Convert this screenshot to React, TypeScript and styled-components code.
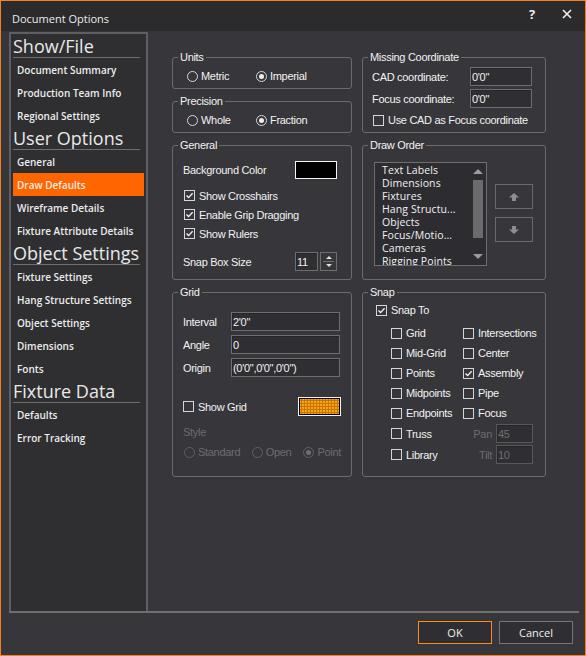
import styled, { createGlobalStyle } from "styled-components";

const GlobalStyle = createGlobalStyle`
  html, body {
    margin: 0;
    padding: 0;
    background: #37363a;
  }
  body {
    width: 586px;
    height: 656px;
    overflow: hidden;
  }
  * {
    box-sizing: border-box;
  }
`;

const Window = styled.div`
  width: 586px;
  height: 656px;
  border: 1px solid #f7801e;
  background: #37363a;
  display: flex;
  flex-direction: column;
  font-family: "Liberation Sans", Arial, sans-serif;
  font-size: 11px;
  color: #f2f2f2;
`;

const TitleBar = styled.div`
  height: 30px;
  flex: none;
  background: #2b2a2d;
  display: flex;
  align-items: center;
  padding-left: 11px;
  font-family: "Open Sans", sans-serif;
  font-size: 11px;
  color: #ececec;

  .title {
    flex: 1;
    padding-top: 4px;
  }
`;

const TitleButton = styled.div<{ $w: number }>`
  width: ${(p) => p.$w}px;
  height: 30px;
  display: flex;
  align-items: center;
  justify-content: center;
  font-weight: 700;
  font-size: 13px;
  padding-bottom: 4px;
`;

const Main = styled.div`
  display: flex;
  height: 581px;
  margin: 1px 6px 0 8px;
  border-bottom: 2px solid #6f6f6f;
`;

const Sidebar = styled.div`
  width: 139px;
  flex: none;
  background: #2f2f31;
  border: 2px solid #5f5f61;
  border-bottom: none;
  padding: 1px 0 0;
  font-family: "Open Sans", sans-serif;
`;

const NavHeader = styled.div`
  height: 23px;
  margin: 0 6px 0 2px;
  border-bottom: 1px solid #6e6e6e;
  font-size: 18px;
  line-height: 22px;
  color: #e9e9e9;
  white-space: nowrap;
`;

const NavItem = styled.div<{ $active?: boolean }>`
  height: 23px;
  margin: 0 2px;
  padding-left: 4px;
  display: flex;
  align-items: center;
  font-size: 10px;
  font-weight: 600;
  color: #ececec;
  white-space: nowrap;
  background: ${(p) => (p.$active ? "#ff6600" : "transparent")};
`;

const Content = styled.div`
  flex: 1;
  display: flex;
  gap: 10px;
  padding: 19px 0 0 24px;
  letter-spacing: -0.3px;
`;

const Column = styled.div<{ $w: number }>`
  width: ${(p) => p.$w}px;
  display: flex;
  flex-direction: column;
  gap: 6px;
`;

const Group = styled.fieldset<{ $h: number }>`
  margin: 0;
  padding: 0;
  min-width: 0;
  height: ${(p) => p.$h}px;
  border: 1px solid #6b6b6d;
  border-radius: 3px;

  legend {
    margin-left: 5px;
    padding: 0 2px;
    line-height: 12px;
    font-size: 11px;
  }
`;

const RadioRow = styled.div<{ $pad?: string }>`
  display: flex;
  align-items: center;
  height: 14px;
  padding: ${(p) => p.$pad || "0"};
  box-sizing: content-box;
`;

const OptionLabel = styled.label<{ $w?: number; $disabled?: boolean }>`
  display: flex;
  align-items: center;
  gap: 3px;
  height: 14px;
  width: ${(p) => (p.$w ? `${p.$w}px` : "auto")};
  color: ${(p) => (p.$disabled ? "#6d6d70" : "#f2f2f2")};
  white-space: nowrap;
`;

const RadioDot = styled.span<{ $on?: boolean; $disabled?: boolean }>`
  width: 11px;
  height: 11px;
  flex: none;
  border-radius: 50%;
  border: 1px solid ${(p) => (p.$disabled ? "#616164" : "#d8d8d8")};
  display: grid;
  place-items: center;

  &::after {
    content: "";
    width: 5px;
    height: 5px;
    border-radius: 50%;
    background: ${(p) => (p.$disabled ? "#6d6d70" : "#ececec")};
    display: ${(p) => (p.$on ? "block" : "none")};
  }
`;

const CheckBox = styled.span<{ $disabled?: boolean }>`
  width: 11px;
  height: 11px;
  flex: none;
  border: 1px solid ${(p) => (p.$disabled ? "#616164" : "#d6d6d6")};
  display: grid;
  place-items: center;
  margin-right: 1px;
`;

const Input = styled.input<{ $w?: number; $disabled?: boolean }>`
  width: ${(p) => (p.$w ? `${p.$w}px` : "100%")};
  height: 19px;
  border: 1px solid ${(p) => (p.$disabled ? "#58585b" : "#6e6e71")};
  box-shadow: inset 1px 1px 0 #262528;
  background: #2f2e32;
  color: ${(p) => (p.$disabled ? "#6f6f72" : "#f2f2f2")};
  font: inherit;
  letter-spacing: -0.3px;
  padding: 0 1px;
  outline: none;
`;

const Swatch = styled.div<{ $w: number; $h: number; $grid?: boolean }>`
  width: ${(p) => p.$w}px;
  height: ${(p) => p.$h}px;
  border: 1px solid #f4f4f4;
  box-shadow: inset 0 0 0 1px #000;
  background: ${(p) =>
    p.$grid
      ? `repeating-linear-gradient(90deg, transparent 0 2px, #c77700 2px 3px),
         repeating-linear-gradient(0deg, transparent 0 2px, #c77700 2px 3px), #f6a31c`
      : "#000"};
`;

/* General */
const GeneralBody = styled.div`
  padding: 10px 14px 0 10px;
`;

const SpreadRow = styled.div<{ $h: number; $mt?: number }>`
  display: flex;
  align-items: center;
  justify-content: space-between;
  height: ${(p) => p.$h}px;
  margin-top: ${(p) => p.$mt || 0}px;
`;

const CheckList = styled.div`
  margin: 7px 0 0 1px;
  display: flex;
  flex-direction: column;

  & > label {
    height: 19px;
  }
`;

const SpinGroup = styled.div`
  display: flex;
  gap: 2px;
`;

const Spinner = styled.div`
  width: 17px;
  height: 19px;
  border: 1px solid #6e6e71;
  display: flex;
  flex-direction: column;
  align-items: center;
  justify-content: space-around;
  padding: 2px 0;

  span {
    width: 0;
    height: 0;
    border-left: 3px solid transparent;
    border-right: 3px solid transparent;
  }
  .up {
    border-bottom: 3px solid #e0e0e0;
  }
  .down {
    border-top: 3px solid #e0e0e0;
  }
  hr {
    width: 11px;
    margin: 0;
    border: none;
    border-top: 1px solid #6e6e71;
  }
`;

/* Grid */
const GridBody = styled.div`
  padding: 14px 10px 0 10px;
`;

const FieldGrid = styled.div<{ $cols: string; $gap: number }>`
  display: grid;
  grid-template-columns: ${(p) => p.$cols};
  grid-auto-rows: 19px;
  row-gap: ${(p) => p.$gap}px;
  align-items: center;
  white-space: nowrap;
`;

const MutedLabel = styled.div<{ $mt: number }>`
  height: 14px;
  line-height: 14px;
  margin-top: ${(p) => p.$mt}px;
  color: #6d6d70;
`;

/* Missing coordinate */
const MissingBody = styled.div`
  padding: 4px 12px 0 9px;
`;

/* Draw order */
const DrawBody = styled.div`
  display: flex;
  gap: 8px;
  padding: 11px 0 0 11px;
`;

const ListBox = styled.div`
  width: 113px;
  height: 104px;
  border: 1px solid #6e6e71;
  background: #2d2c30;
  display: flex;
  overflow: hidden;
`;

const ListItems = styled.div`
  flex: 1;
  padding: 1px 0 0 7px;
  font-family: "Open Sans", sans-serif;
  font-size: 10.5px;
  line-height: 13px;
  letter-spacing: 0.1px;
  color: #f0f0f0;
  white-space: nowrap;
  overflow: hidden;
`;

const ScrollBar = styled.div`
  width: 17px;
  display: flex;
  flex-direction: column;
  align-items: center;

  .arrow {
    height: 17px;
    display: grid;
    place-items: center;
  }
  .thumb {
    width: 10px;
    height: 58px;
    background: #6b6b6e;
  }
  .track {
    flex: 1;
  }
`;

const Tri = styled.span<{ $dir: "up" | "down" }>`
  width: 0;
  height: 0;
  border-left: 5px solid transparent;
  border-right: 5px solid transparent;
  ${(p) =>
    p.$dir === "up"
      ? "border-bottom: 5px solid #9b9b9e;"
      : "border-top: 5px solid #9b9b9e;"}
`;

const OrderButtons = styled.div`
  margin-top: 22px;
  display: flex;
  flex-direction: column;
  gap: 8px;
`;

const OrderButton = styled.div`
  width: 38px;
  height: 25px;
  border: 1px solid #6a6a6d;
  display: grid;
  place-items: center;
`;

/* Snap */
const SnapBody = styled.div`
  padding: 5px 0 0 13px;
`;

const SnapGrid = styled.div`
  margin: 6px 0 0 15px;
  display: grid;
  grid-template-columns: 72px 70px;
  grid-template-rows: repeat(5, 20px) 21px 21px;
  align-items: center;
  white-space: nowrap;
`;

const AngleCell = styled.div`
  display: flex;
  align-items: center;
  justify-content: flex-end;
  gap: 4px;
  color: #6d6d70;
`;

/* Footer */
const Footer = styled.div`
  flex: 1;
  display: flex;
  justify-content: flex-end;
  gap: 7px;
  padding: 8px 12px 0 0;
`;

const Button = styled.div<{ $primary?: boolean }>`
  width: 74px;
  height: 23px;
  border: 1px solid ${(p) => (p.$primary ? "#ff8a1c" : "#77777a")};
  background: #2f2e32;
  display: grid;
  place-items: center;
  font-family: "Open Sans", sans-serif;
  font-size: 11px;
  color: #f0f0f0;
`;

function Radio({
  label,
  on,
  w,
  disabled,
}: {
  label: string;
  on?: boolean;
  w?: number;
  disabled?: boolean;
}) {
  return (
    <OptionLabel $w={w} $disabled={disabled}>
      <RadioDot $on={on} $disabled={disabled} />
      {label}
    </OptionLabel>
  );
}

function Check({ label, on }: { label: string; on?: boolean }) {
  return (
    <OptionLabel>
      <CheckBox>
        {on && (
          <svg width="9" height="9" viewBox="0 0 9 9">
            <path d="M1.5 4.5 L3.6 6.6 L7.6 2.2" fill="none" stroke="#f2f2f2" strokeWidth="1.4" />
          </svg>
        )}
      </CheckBox>
      {label}
    </OptionLabel>
  );
}

function ArrowIcon({ down }: { down?: boolean }) {
  return (
    <svg width="10" height="8" viewBox="0 0 10 8">
      <path
        d="M5 0 L10 4.5 H7 V8 H3 V4.5 H0 Z"
        fill="#8e8e91"
        transform={down ? "rotate(180 5 4)" : undefined}
      />
    </svg>
  );
}

const drawOrder = [
  "Text Labels",
  "Dimensions",
  "Fixtures",
  "Hang Structu...",
  "Objects",
  "Focus/Motio...",
  "Cameras",
  "Rigging Points",
];

export default function App() {
  return (
    <>
      <GlobalStyle />
      <Window>
        <TitleBar>
          <div className="title">Document Options</div>
          <TitleButton $w={34}>?</TitleButton>
          <TitleButton $w={36}>
            <svg width="10" height="10" viewBox="0 0 10 10">
              <path d="M1 1 L9 9 M9 1 L1 9" stroke="#f0f0f0" strokeWidth="1.6" />
            </svg>
          </TitleButton>
        </TitleBar>

        <Main>
          <Sidebar>
            <NavHeader>Show/File</NavHeader>
            <NavItem>Document Summary</NavItem>
            <NavItem>Production Team Info</NavItem>
            <NavItem>Regional Settings</NavItem>
            <NavHeader>User Options</NavHeader>
            <NavItem>General</NavItem>
            <NavItem $active>Draw Defaults</NavItem>
            <NavItem>Wireframe Details</NavItem>
            <NavItem>Fixture Attribute Details</NavItem>
            <NavHeader>Object Settings</NavHeader>
            <NavItem>Fixture Settings</NavItem>
            <NavItem>Hang Structure Settings</NavItem>
            <NavItem>Object Settings</NavItem>
            <NavItem>Dimensions</NavItem>
            <NavItem>Fonts</NavItem>
            <NavHeader>Fixture Data</NavHeader>
            <NavItem>Defaults</NavItem>
            <NavItem>Error Tracking</NavItem>
          </Sidebar>

          <Content>
            <Column $w={180}>
              <Group $h={38}>
                <legend>Units</legend>
                <RadioRow $pad="6px 0 0 14px">
                  <Radio label="Metric" w={69} />
                  <Radio label="Imperial" on />
                </RadioRow>
              </Group>

              <Group $h={38}>
                <legend>Precision</legend>
                <RadioRow $pad="6px 0 0 14px">
                  <Radio label="Whole" w={69} />
                  <Radio label="Fraction" on />
                </RadioRow>
              </Group>

              <Group $h={141}>
                <legend>General</legend>
                <GeneralBody>
                  <SpreadRow $h={18}>
                    <span>Background Color</span>
                    <Swatch $w={42} $h={18} />
                  </SpreadRow>
                  <CheckList>
                    <Check label="Show Crosshairs" on />
                    <Check label="Enable Grip Dragging" on />
                    <Check label="Show Rulers" on />
                  </CheckList>
                  <SpreadRow $h={19} $mt={9}>
                    <span>Snap Box Size</span>
                    <SpinGroup>
                      <Input $w={23} defaultValue="11" readOnly />
                      <Spinner>
                        <span className="up" />
                        <hr />
                        <span className="down" />
                      </Spinner>
                    </SpinGroup>
                  </SpreadRow>
                </GeneralBody>
              </Group>

              <Group $h={191}>
                <legend>Grid</legend>
                <GridBody>
                  <FieldGrid $cols="48px 109px" $gap={4}>
                    <span>Interval</span>
                    <Input defaultValue={`2'0"`} readOnly />
                    <span>Angle</span>
                    <Input defaultValue="0" readOnly />
                    <span>Origin</span>
                    <Input defaultValue={`(0'0",0'0",0'0")`} readOnly />
                  </FieldGrid>
                  <SpreadRow $h={19} $mt={20}>
                    <Check label="Show Grid" />
                    <Swatch $w={43} $h={19} $grid />
                  </SpreadRow>
                  <MutedLabel $mt={9}>Style</MutedLabel>
                  <RadioRow $pad="6px 0 0 1px">
                    <Radio label="Standard" w={68} disabled />
                    <Radio label="Open" w={52} disabled />
                    <Radio label="Point" on disabled />
                  </RadioRow>
                </GridBody>
              </Group>
            </Column>

            <Column $w={184}>
              <Group $h={82}>
                <legend>Missing Coordinate</legend>
                <MissingBody>
                  <FieldGrid $cols="98px 62px" $gap={3}>
                    <span>CAD coordinate:</span>
                    <Input defaultValue={`0'0"`} readOnly />
                    <span>Focus coordinate:</span>
                    <Input defaultValue={`0'0"`} readOnly />
                  </FieldGrid>
                  <RadioRow $pad="5px 0 0 1px">
                    <Check label="Use CAD as Focus coordinate" />
                  </RadioRow>
                </MissingBody>
              </Group>

              <Group $h={141}>
                <legend>Draw Order</legend>
                <DrawBody>
                  <ListBox>
                    <ListItems>
                      {drawOrder.map((d) => (
                        <div key={d}>{d}</div>
                      ))}
                    </ListItems>
                    <ScrollBar>
                      <div className="arrow">
                        <Tri $dir="up" />
                      </div>
                      <div className="thumb" />
                      <div className="track" />
                      <div className="arrow">
                        <Tri $dir="down" />
                      </div>
                    </ScrollBar>
                  </ListBox>
                  <OrderButtons>
                    <OrderButton>
                      <ArrowIcon />
                    </OrderButton>
                    <OrderButton>
                      <ArrowIcon down />
                    </OrderButton>
                  </OrderButtons>
                </DrawBody>
              </Group>

              <Group $h={191}>
                <legend>Snap</legend>
                <SnapBody>
                  <RadioRow>
                    <Check label="Snap To" on />
                  </RadioRow>
                  <SnapGrid>
                    <Check label="Grid" />
                    <Check label="Intersections" />
                    <Check label="Mid-Grid" />
                    <Check label="Center" />
                    <Check label="Points" />
                    <Check label="Assembly" on />
                    <Check label="Midpoints" />
                    <Check label="Pipe" />
                    <Check label="Endpoints" />
                    <Check label="Focus" />
                    <Check label="Truss" />
                    <AngleCell>
                      Pan
                      <Input $w={37} $disabled defaultValue="45" readOnly />
                    </AngleCell>
                    <Check label="Library" />
                    <AngleCell>
                      Tilt
                      <Input $w={37} $disabled defaultValue="10" readOnly />
                    </AngleCell>
                  </SnapGrid>
                </SnapBody>
              </Group>
            </Column>
          </Content>
        </Main>

        <Footer>
          <Button $primary>OK</Button>
          <Button>Cancel</Button>
        </Footer>
      </Window>
    </>
  );
}
